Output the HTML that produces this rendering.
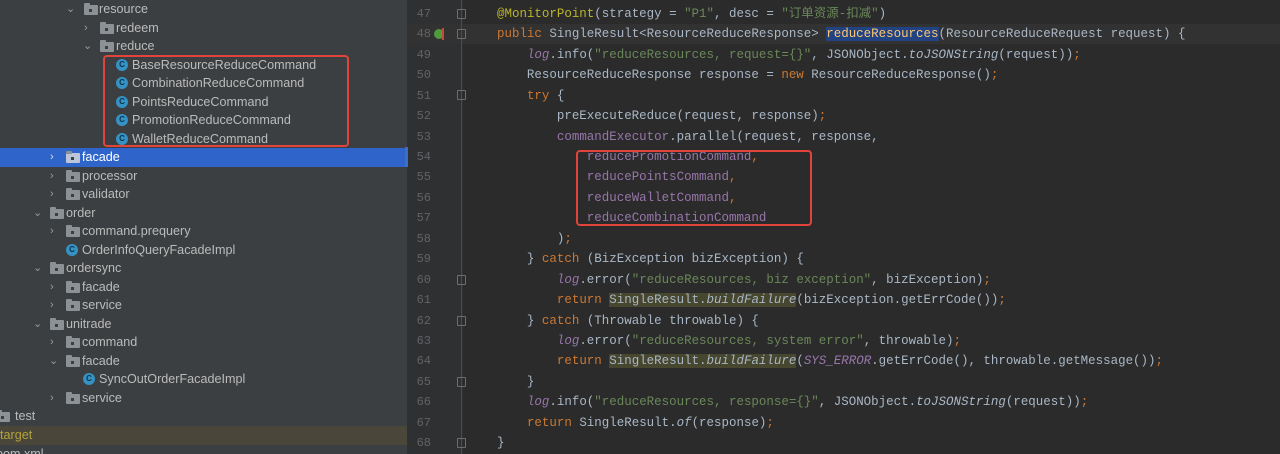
<!DOCTYPE html>
<html><head><meta charset="utf-8"><style>
*{margin:0;padding:0;box-sizing:border-box}
body{width:1280px;height:454px;overflow:hidden;background:#2b2b2b;position:relative;font-family:"Liberation Sans","Noto Sans CJK SC",sans-serif}
#tree{position:absolute;left:0;top:0;width:407px;height:454px;background:#3c3f41;overflow:hidden}
.r{position:absolute;left:0;width:407px;height:18.5px;line-height:18.5px;font-size:12.6px;color:#bbbbbb;white-space:nowrap}
.r .ch{position:absolute;top:0;color:#9a9da0;font-size:11px}
.r .fd{position:absolute;top:5px;width:14px;height:10px;background:#8c9196;border-radius:1px}
.r .fd:before{content:"";position:absolute;left:0;top:-2px;width:6px;height:3px;background:#8c9196;border-radius:1px 1px 0 0}
.r .fd:after{content:"";position:absolute;left:5px;top:4px;width:3px;height:3px;background:#3c3f41}
.r .ci{position:absolute;top:3px;width:12px;height:12px;border-radius:50%;background:#3592c4;color:#0d3349;font-size:8px;line-height:12px;text-align:center;font-weight:bold}
.r .t{position:absolute;top:0}
#gut{position:absolute;left:407px;top:0;width:56px;height:454px;background:#2f3032}
.ln{position:absolute;left:407px;width:24px;text-align:right;font-family:"Liberation Mono",monospace;font-size:12px;color:#606366}
.cl{position:absolute;left:497px;font-family:"Liberation Mono","Noto Sans CJK SC",monospace;font-size:12.47px;color:#a9b7c6;white-space:pre;height:20.43px;line-height:20.43px}
.k{color:#cc7832}.s{color:#6a8759}.p{color:#9876aa}.a{color:#bbb529}.m{color:#ffc66d}.i{font-style:italic}
.hl{background:#214283}.hy{background:#47462e}
.box{position:absolute;border:2px solid #e0443a;border-radius:4px}
.fold{position:absolute;left:457px;width:9px;height:10px;border:1px solid #6b6e70;border-radius:1px}
</style></head><body>
<div id="tree">
<div class="r" style="top:0"><span class="ch" style="left:66px">⌄</span><span class="fd" style="left:84px"></span><span class="t" style="left:99px">resource</span></div>
<div class="r" style="top:18.5px"><span class="ch" style="left:84px">›</span><span class="fd" style="left:100px"></span><span class="t" style="left:116px">redeem</span></div>
<div class="r" style="top:37px"><span class="ch" style="left:83px">⌄</span><span class="fd" style="left:100px"></span><span class="t" style="left:116px">reduce</span></div>
<div class="r" style="top:55.5px"><span class="ci" style="left:116px">C</span><span class="t" style="left:132px">BaseResourceReduceCommand</span></div>
<div class="r" style="top:74px"><span class="ci" style="left:116px">C</span><span class="t" style="left:132px">CombinationReduceCommand</span></div>
<div class="r" style="top:92.5px"><span class="ci" style="left:116px">C</span><span class="t" style="left:132px">PointsReduceCommand</span></div>
<div class="r" style="top:111px"><span class="ci" style="left:116px">C</span><span class="t" style="left:132px">PromotionReduceCommand</span></div>
<div class="r" style="top:129.5px"><span class="ci" style="left:116px">C</span><span class="t" style="left:132px">WalletReduceCommand</span></div>
<div class="r" style="top:148px;background:#2f65ca;color:#fff"><span class="ch" style="left:50px;color:#dde">›</span><span class="fd" style="left:66px;background:#bcc6d8"></span><span class="t" style="left:82px">facade</span></div>
<div class="r" style="top:166.5px"><span class="ch" style="left:50px">›</span><span class="fd" style="left:66px"></span><span class="t" style="left:82px">processor</span></div>
<div class="r" style="top:185px"><span class="ch" style="left:50px">›</span><span class="fd" style="left:66px"></span><span class="t" style="left:82px">validator</span></div>
<div class="r" style="top:203.5px"><span class="ch" style="left:33px">⌄</span><span class="fd" style="left:50px"></span><span class="t" style="left:66px">order</span></div>
<div class="r" style="top:222px"><span class="ch" style="left:50px">›</span><span class="fd" style="left:66px"></span><span class="t" style="left:82px">command.prequery</span></div>
<div class="r" style="top:240.5px"><span class="ci" style="left:66px">C</span><span class="t" style="left:82px">OrderInfoQueryFacadeImpl</span></div>
<div class="r" style="top:259px"><span class="ch" style="left:33px">⌄</span><span class="fd" style="left:50px"></span><span class="t" style="left:66px">ordersync</span></div>
<div class="r" style="top:277.5px"><span class="ch" style="left:50px">›</span><span class="fd" style="left:66px"></span><span class="t" style="left:82px">facade</span></div>
<div class="r" style="top:296px"><span class="ch" style="left:50px">›</span><span class="fd" style="left:66px"></span><span class="t" style="left:82px">service</span></div>
<div class="r" style="top:314.5px"><span class="ch" style="left:33px">⌄</span><span class="fd" style="left:50px"></span><span class="t" style="left:66px">unitrade</span></div>
<div class="r" style="top:333px"><span class="ch" style="left:50px">›</span><span class="fd" style="left:66px"></span><span class="t" style="left:82px">command</span></div>
<div class="r" style="top:351.5px"><span class="ch" style="left:49px">⌄</span><span class="fd" style="left:66px"></span><span class="t" style="left:82px">facade</span></div>
<div class="r" style="top:370px"><span class="ci" style="left:83px">C</span><span class="t" style="left:99px">SyncOutOrderFacadeImpl</span></div>
<div class="r" style="top:388.5px"><span class="ch" style="left:50px">›</span><span class="fd" style="left:66px"></span><span class="t" style="left:82px">service</span></div>
<div class="r" style="top:407px"><span class="fd" style="left:-4px"></span><span class="t" style="left:15px">test</span></div>
<div class="r" style="top:426px;background:#4a473a;color:#b3a33a"><span class="t" style="left:0">target</span></div>
<div class="r" style="top:444.5px"><span class="t" style="left:-4px">pom.xml</span></div>
<div class="box" style="left:103px;top:55px;width:246px;height:92px"></div>
</div>
<div id="gut"></div>
<div style="position:absolute;left:407px;top:24px;width:873px;height:20.4px;background:#323232"></div>
<div style="position:absolute;left:405px;top:147px;width:3px;height:20px;background:#3c6fc4"></div>
<div style="position:absolute;left:461px;top:0;width:1px;height:454px;background:#4a4c4e"></div>
<div style="position:absolute;left:434px;top:29px;width:10px;height:10px;border-radius:50%;background:#4e9a3d"></div>
<div style="position:absolute;left:442px;top:28px;width:2px;height:12px;background:#c9463d"></div>
<div class="fold" style="top:9px"></div><div class="fold" style="top:29px"></div><div class="fold" style="top:90px"></div>
<div class="fold" style="top:275px"></div><div class="fold" style="top:316px"></div><div class="fold" style="top:377px"></div><div class="fold" style="top:438px"></div>

<div class="ln" style="top:4px;line-height:20.43px">47</div>
<div class="ln" style="top:24.4px;line-height:20.43px">48</div>
<div class="ln" style="top:44.9px;line-height:20.43px">49</div>
<div class="ln" style="top:65.3px;line-height:20.43px">50</div>
<div class="ln" style="top:85.7px;line-height:20.43px">51</div>
<div class="ln" style="top:106.2px;line-height:20.43px">52</div>
<div class="ln" style="top:126.6px;line-height:20.43px">53</div>
<div class="ln" style="top:147px;line-height:20.43px">54</div>
<div class="ln" style="top:167.4px;line-height:20.43px">55</div>
<div class="ln" style="top:187.9px;line-height:20.43px">56</div>
<div class="ln" style="top:208.3px;line-height:20.43px">57</div>
<div class="ln" style="top:228.7px;line-height:20.43px">58</div>
<div class="ln" style="top:249.2px;line-height:20.43px">59</div>
<div class="ln" style="top:269.6px;line-height:20.43px">60</div>
<div class="ln" style="top:290px;line-height:20.43px">61</div>
<div class="ln" style="top:310.5px;line-height:20.43px">62</div>
<div class="ln" style="top:330.9px;line-height:20.43px">63</div>
<div class="ln" style="top:351.3px;line-height:20.43px">64</div>
<div class="ln" style="top:371.7px;line-height:20.43px">65</div>
<div class="ln" style="top:392.2px;line-height:20.43px">66</div>
<div class="ln" style="top:412.6px;line-height:20.43px">67</div>
<div class="ln" style="top:433px;line-height:20.43px">68</div>

<div class="cl" style="top:4px"><span class="a">@MonitorPoint</span>(strategy = <span class="s">"P1"</span>, desc = <span class="s">"订单资源-扣减"</span>)</div>
<div class="cl" style="top:24.4px"><span class="k">public </span>SingleResult&lt;ResourceReduceResponse&gt; <span class="m hl">reduceResources</span>(ResourceReduceRequest request) {</div>
<div class="cl" style="top:44.9px">    <span class="p i">log</span>.info(<span class="s">"reduceResources, request={}"</span>, JSONObject.<span class="i">toJSONString</span>(request))<span class="k">;</span></div>
<div class="cl" style="top:65.3px">    ResourceReduceResponse response = <span class="k">new </span>ResourceReduceResponse()<span class="k">;</span></div>
<div class="cl" style="top:85.7px">    <span class="k">try </span>{</div>
<div class="cl" style="top:106.2px">        preExecuteReduce(request, response)<span class="k">;</span></div>
<div class="cl" style="top:126.6px">        <span class="p">commandExecutor</span>.parallel(request, response,</div>
<div class="cl" style="top:147px">            <span class="p">reducePromotionCommand</span><span class="k">,</span></div>
<div class="cl" style="top:167.4px">            <span class="p">reducePointsCommand</span><span class="k">,</span></div>
<div class="cl" style="top:187.9px">            <span class="p">reduceWalletCommand</span><span class="k">,</span></div>
<div class="cl" style="top:208.3px">            <span class="p">reduceCombinationCommand</span></div>
<div class="cl" style="top:228.7px">        )<span class="k">;</span></div>
<div class="cl" style="top:249.2px">    } <span class="k">catch </span>(BizException bizException) {</div>
<div class="cl" style="top:269.6px">        <span class="p i">log</span>.error(<span class="s">"reduceResources, biz exception"</span>, bizException)<span class="k">;</span></div>
<div class="cl" style="top:290px">        <span class="k">return </span><span class="hy">SingleResult.<span class="i">buildFailure</span></span>(bizException.getErrCode())<span class="k">;</span></div>
<div class="cl" style="top:310.5px">    } <span class="k">catch </span>(Throwable throwable) {</div>
<div class="cl" style="top:330.9px">        <span class="p i">log</span>.error(<span class="s">"reduceResources, system error"</span>, throwable)<span class="k">;</span></div>
<div class="cl" style="top:351.3px">        <span class="k">return </span><span class="hy">SingleResult.<span class="i">buildFailure</span></span>(<span class="p i">SYS_ERROR</span>.getErrCode(), throwable.getMessage())<span class="k">;</span></div>
<div class="cl" style="top:371.7px">    }</div>
<div class="cl" style="top:392.2px">    <span class="p i">log</span>.info(<span class="s">"reduceResources, response={}"</span>, JSONObject.<span class="i">toJSONString</span>(request))<span class="k">;</span></div>
<div class="cl" style="top:412.6px">    <span class="k">return </span>SingleResult.<span class="i">of</span>(response)<span class="k">;</span></div>
<div class="cl" style="top:433px">}</div>
<div class="box" style="left:576px;top:150px;width:236px;height:76px"></div>
</body></html>
